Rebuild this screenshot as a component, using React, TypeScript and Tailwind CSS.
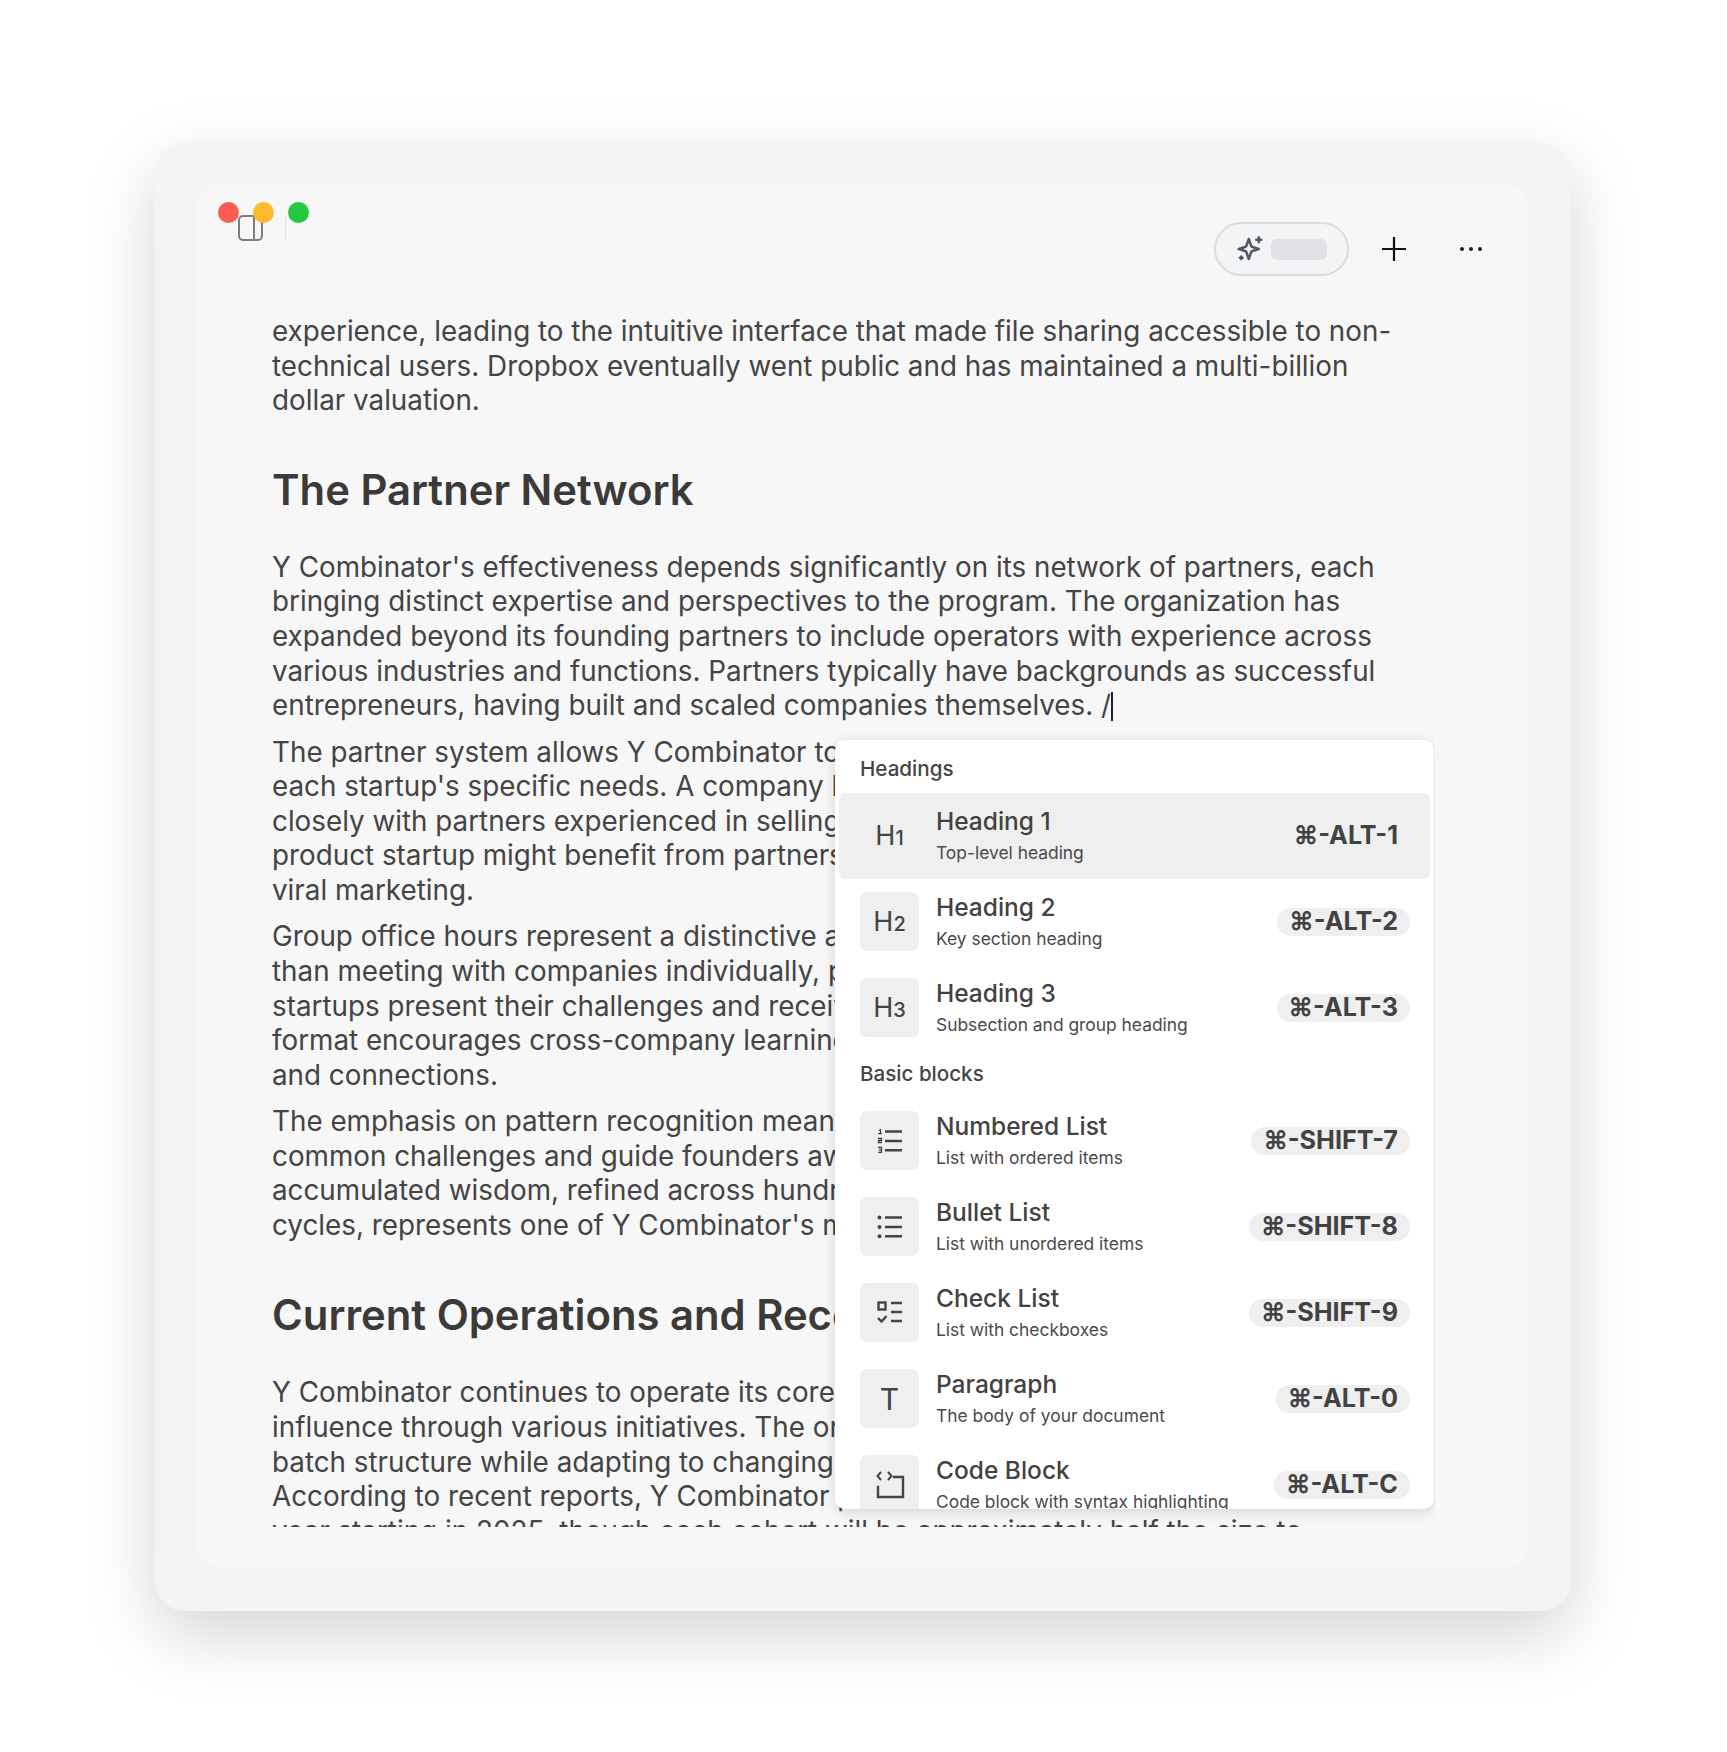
const FONT = "font-['Inter','Liberation_Sans',sans-serif]";

const P = ({ lines }: { lines: string[] }) => (
  <p className="mb-[11.8px] whitespace-nowrap">
    {lines.map((l, i) => (
      <span key={i} className="block">{l}</span>
    ))}
  </p>
);

const H1Tile = ({ d }: { d: string }) => (
  <span className="flex items-baseline text-[#444]">
    <span className="text-[27px] leading-none">H</span>
    <span className="text-[20px] leading-none font-medium">{d}</span>
  </span>
);

const Stroke = ({ children }: { children: React.ReactNode }) => (
  <svg width="26" height="24" viewBox="0 0 26 24" fill="none" stroke="#444" strokeWidth="2.400">
    {children}
  </svg>
);

const Numbered = () => (
  <Stroke>
    <path d="M8 2.500h17M8 12h17M8 21.300h17" />
    <path strokeWidth="1.300" d="M2 1.500l1.500-.8v4M1 4.700h4M1 9.500h3.500v2h-3v2h3.500M1 18.500h3.500v5h-3.500M2 21h3" />
  </Stroke>
);
const Bullet = () => (
  <Stroke>
    <path d="M8 2.500h17M8 12h17M8 21.300h17" />
    <circle cx="2.500" cy="2.500" r="2" fill="#444" stroke="none" />
    <circle cx="2.500" cy="12" r="2" fill="#444" stroke="none" />
    <circle cx="2.500" cy="21.300" r="2" fill="#444" stroke="none" />
  </Stroke>
);
const Check = () => (
  <Stroke>
    <rect x="1.500" y="1.500" width="7" height="7" />
    <path d="M14 2h11M14 11h11M14 20h11" />
    <path d="M1 17l3.500 3.500 5-5.500" />
  </Stroke>
);
const Code = () => (
  <svg width="30" height="30" viewBox="0 0 30 30" fill="none" stroke="#444" strokeWidth="2.400" strokeLinecap="square">
    <path d="M19 7h9v20H3V17" />
    <path strokeWidth="2" strokeLinecap="butt" d="M6 2L2.500 6 6 10M13 2l3.500 4-3.500 4" />
  </svg>
);

type Item = { icon: React.ReactNode; title: string; sub: string; key_: string; active?: boolean };

const headings: Item[] = [
  { icon: <H1Tile d="1" />, title: "Heading 1", sub: "Top-level heading", key_: "⌘-ALT-1", active: true },
  { icon: <H1Tile d="2" />, title: "Heading 2", sub: "Key section heading", key_: "⌘-ALT-2" },
  { icon: <H1Tile d="3" />, title: "Heading 3", sub: "Subsection and group heading", key_: "⌘-ALT-3" },
];
const blocks: Item[] = [
  { icon: <Numbered />, title: "Numbered List", sub: "List with ordered items", key_: "⌘-SHIFT-7" },
  { icon: <Bullet />, title: "Bullet List", sub: "List with unordered items", key_: "⌘-SHIFT-8" },
  { icon: <Check />, title: "Check List", sub: "List with checkboxes", key_: "⌘-SHIFT-9" },
  { icon: <span className="text-[30px] leading-none text-[#444]">T</span>, title: "Paragraph", sub: "The body of your document", key_: "⌘-ALT-0" },
  { icon: <Code />, title: "Code Block", sub: "Code block with syntax highlighting", key_: "⌘-ALT-C" },
];

const Row = ({ item }: { item: Item }) => (
  <div className={`flex h-[86px] items-center rounded-[7px] pl-[21px] pr-[20px] ${item.active ? "bg-[#efefef]" : ""}`}>
    <div className={`flex h-[59px] w-[59px] shrink-0 items-center justify-center rounded-[7px] ${item.active ? "" : "bg-[#efefef]"}`}>
      {item.icon}
    </div>
    <div className="ml-[17px] flex-1">
      <div className="-mt-[2px] text-[24.5px] leading-[32px] font-medium text-[#424242]">{item.title}</div>
      <div className="mt-[4px] text-[17.4px] leading-[24px] text-[#4a4a4a]">{item.sub}</div>
    </div>
    <div className={`flex h-[28px] items-center rounded-full px-[12px] text-[25.2px] leading-none font-bold text-[#424242] ${item.active ? "" : "bg-[#efefef]"}`}>
      {item.key_}
    </div>
  </div>
);

const Label = ({ children }: { children: React.ReactNode }) => (
  <div className="flex h-[47px] items-center pl-[21px] text-[20.6px] font-medium text-[#444]">{children}</div>
);

export default function App() {
  return (
    <div className={`h-[1752px] w-full overflow-hidden bg-white pl-[155px] pt-[143px] ${FONT}`}>
      <div className="h-[1468px] w-[1416px] rounded-[30px] bg-[#f4f4f3] pl-[42px] pt-[40px] shadow-[0_24px_70px_rgba(0,0,0,0.17)]">
        <div className="relative h-[1385px] w-[1331px] rounded-[26px] bg-[#f7f7f7]">
          {/* toolbar */}
          <div className="relative flex h-[117px] items-start">
            <div className="ml-[41px] mt-[32px] flex h-[26px] items-center">
              <svg width="25" height="26" viewBox="0 0 25 26" fill="none" stroke="#7c7c85" strokeWidth="2">
                <rect x="1" y="1" width="23" height="24" rx="4" />
                <path d="M16 1v24" />
              </svg>
              <div className="ml-[22px] h-[28px] w-px bg-[#e2e2e2]" />
            </div>
            <div className="absolute left-[21px] top-[19px] flex gap-[13.8px]">
              <span className="h-[21px] w-[21px] rounded-full bg-[#ff5a52]" />
              <span className="h-[21px] w-[21px] rounded-full bg-[#ffbb2c]" />
              <span className="h-[21px] w-[21px] rounded-full bg-[#26c840]" />
            </div>
            <div className="ml-auto mr-[45px] mt-[39px] flex items-center">
              <div className="flex h-[54px] w-[135px] items-center rounded-full border-2 border-[#dcdcdb] bg-[#f3f4f6] pl-[19px]">
                <svg width="30" height="30" viewBox="0 0 24 24" fill="none" stroke="#4f5a69" strokeWidth="2" strokeLinecap="round" strokeLinejoin="round">
                  <path d="M11 4l1.800 5.200c.2.600.6 1 1.200 1.200L19 12l-5 1.600c-.6.200-1 .6-1.200 1.200L11 20l-1.800-5.200c-.2-.6-.6-1-1.200-1.200L3 12l5-1.600c.6-.2 1-.6 1.200-1.200z" />
                  <path d="M19 2.500v4M17 4.500h4M5 18v2M4 19h2" />
                </svg>
                <div className="ml-[6px] h-[21px] w-[56px] rounded-[6px] bg-[#e1e2e5]" />
              </div>
              <svg className="ml-[31px]" width="28" height="28" viewBox="0 0 28 28" fill="none" stroke="#111" strokeWidth="2.200">
                <path d="M14 2v24M2 14h24" />
              </svg>
              <svg className="ml-[51px]" width="24" height="8" viewBox="0 0 24 8" fill="#222">
                <circle cx="3" cy="4" r="2" />
                <circle cx="12" cy="4" r="2" />
                <circle cx="21" cy="4" r="2" />
              </svg>
            </div>
          </div>

          {/* document */}
          <div className="relative ml-[75px] h-[1227px] w-[1163px] overflow-hidden pt-[14px] text-[27.8px] leading-[34.6px] text-[#444]">
            <P
              lines={[
                "experience, leading to the intuitive interface that made file sharing accessible to non-",
                "technical users. Dropbox eventually went public and has maintained a multi-billion",
                "dollar valuation.",
              ]}
            />
            <h2 className="mb-[36px] mt-[48px] text-[41.8px] leading-[48px] font-semibold text-[#3a3a3a]">The Partner Network</h2>
            <p className="mb-[11.8px] whitespace-nowrap">
              <span className="block">Y Combinator's effectiveness depends significantly on its network of partners, each</span>
              <span className="block">bringing distinct expertise and perspectives to the program. The organization has</span>
              <span className="block">expanded beyond its founding partners to include operators with experience across</span>
              <span className="block">various industries and functions. Partners typically have backgrounds as successful</span>
              <span className="block">
                entrepreneurs, having built and scaled companies themselves. /
                <span className="-mb-[6px] inline-block h-[29px] w-[1.500px] bg-[#222]" />
              </span>
            </p>
            <P
              lines={[
                "The partner system allows Y Combinator to match companies with partners suited to",
                "each startup's specific needs. A company building enterprise software might work",
                "closely with partners experienced in selling to businesses, while a consumer",
                "product startup might benefit from partners with deep knowledge of growth and",
                "viral marketing.",
              ]}
            />
            <P
              lines={[
                "Group office hours represent a distinctive aspect of the partner model. Rather",
                "than meeting with companies individually, partners host sessions where several",
                "startups present their challenges and receive feedback from the group. This",
                "format encourages cross-company learning and builds lasting peer relationships",
                "and connections.",
              ]}
            />
            <P
              lines={[
                "The emphasis on pattern recognition means partners can quickly identify",
                "common challenges and guide founders away from well-known mistakes. This",
                "accumulated wisdom, refined across hundreds of companies and dozens of batch",
                "cycles, represents one of Y Combinator's most valuable assets.",
              ]}
            />
            <h2 className="mb-[36px] mt-[49px] whitespace-nowrap text-[41.8px] leading-[48px] font-semibold text-[#3a3a3a]">Current Operations and Recent Developments</h2>
            <P
              lines={[
                "Y Combinator continues to operate its core accelerator while expanding its",
                "influence through various initiatives. The organization has kept its traditional",
                "batch structure while adapting to changing market conditions and founder needs.",
                "According to recent reports, Y Combinator plans to run four batches each",
                "year starting in 2025, though each cohort will be approximately half the size to",
              ]}
            />

            {/* slash menu */}
            <div className="absolute left-[563px] top-[440px] h-[769px] w-[599px] overflow-hidden rounded-[10px] bg-white px-[4px] pt-[5.5px] shadow-[0_3px_14px_rgba(0,0,0,0.14)]">
              <Label>Headings</Label>
              {headings.map((h) => (
                <Row key={h.title} item={h} />
              ))}
              <Label>Basic blocks</Label>
              {blocks.map((b) => (
                <Row key={b.title} item={b} />
              ))}
            </div>
          </div>
        </div>
      </div>
    </div>
  );
}
